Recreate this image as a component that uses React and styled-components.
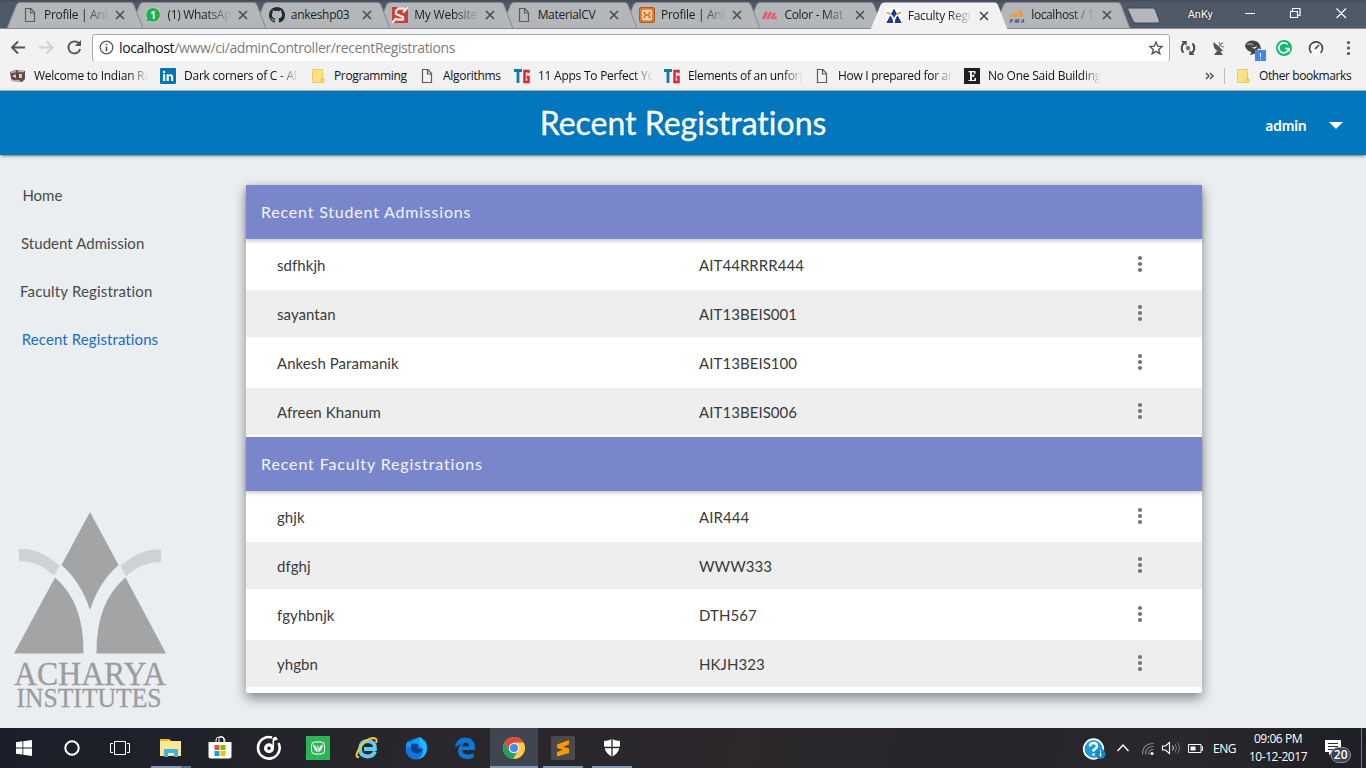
import React from "react";
import styled, { createGlobalStyle, css } from "styled-components";

const Global = createGlobalStyle`
  * { box-sizing: border-box; }
  html, body { margin: 0; padding: 0; overflow: hidden; }
  svg { display: block; flex: none; }
`;

const systemFont = `"Open Sans", "Noto Sans", sans-serif`;

const Screen = styled.div`
  width: 1366px;
  height: 768px;
  display: flex;
  flex-direction: column;
  overflow: hidden;
  font-family: ${systemFont};
  font-variant-ligatures: none;
`;

/* ---------- browser window ---------- */

const TitleBar = styled.div`
  height: 29px;
  flex: none;
  display: flex;
  background: linear-gradient(#434a58 0, #4f5968 3px, #4f5968 100%);
  padding-left: 7px;
  border-bottom: 1px solid #898c90;
`;

const TabShell = styled.div`
  position: relative;
  z-index: ${(p) => p.$z};
  width: 137px;
  height: ${(p) => (p.$active ? 29 : 28)}px;
  margin-right: -13.6px;
  flex: none;
  display: flex;
  align-items: center;
  padding: 2px 0 0 15px;
`;

const TabShape = styled.svg`
  position: absolute;
  left: 0;
  top: 0;
  z-index: -1;
`;

const TabLabel = styled.span`
  width: 65px;
  margin-left: 6px;
  margin-right: 6px;
  overflow: hidden;
  white-space: nowrap;
  font-size: 12px;
  line-height: 18px;
  letter-spacing: ${(p) => p.$track || -0.3}px;
  color: #1c1d1f;
  ${(p) => p.$fade && css`
    mask-image: linear-gradient(90deg, #000 62%, transparent 100%);
  `}
`;

const Caption = styled.div`
  flex: 1;
  display: flex;
  align-items: flex-start;
  margin-left: 9px;
`;

const NewTab = styled.svg`
  margin-top: 7px;
`;

const Profile = styled.span`
  margin: 7px 0 0 27px;
  width: 26px;
  font-family: Roboto, sans-serif;
  font-size: 11px;
  line-height: 15px;
  color: #fff;
  text-shadow: 0 0 2px #222;
  white-space: nowrap;
`;

const WindowControls = styled.svg`
  margin-left: 30px;
`;

const Toolbar = styled.div`
  height: 32px;
  flex: none;
  display: flex;
  align-items: center;
  background: #f2f2f2;
  padding-left: 10px;
`;

const NavIcons = styled.svg`
  margin-right: 8px;
`;

const AddressBar = styled.div`
  width: 1078px;
  height: 28px;
  margin-top: 5px;
  display: flex;
  align-items: center;
  background: #fff;
  border: 1px solid #a9a9a9;
  border-radius: 3px;
  padding: 0 6px;
`;

const Url = styled.span`
  flex: 1;
  margin-left: 5px;
  font-size: 14px;
  line-height: 20px;
  letter-spacing: -0.38px;
  color: #7c7c7c;
  white-space: nowrap;
  b { font-weight: 400; color: #111; }
`;

const Extensions = styled.svg`
  margin: 5px 0 0 8px;
`;

const BookmarkBar = styled.div`
  height: 30px;
  flex: none;
  display: flex;
  align-items: center;
  background: #f2f2f2;
  border-bottom: 1px solid #b1b1b3;
  padding: 1px 0 0 10px;
`;

const Bookmark = styled.div`
  width: ${(p) => p.$w}px;
  flex: none;
  display: flex;
  align-items: center;
`;

const BookmarkLabel = styled.span`
  width: 116px;
  margin-left: 8px;
  overflow: hidden;
  white-space: nowrap;
  font-size: 12px;
  line-height: 18px;
  letter-spacing: ${(p) => p.$track}px;
  color: #111;
  ${(p) => p.$fade && css`
    mask-image: linear-gradient(90deg, #000 82%, transparent 99%);
  `}
`;

const OverflowMark = styled.svg`
  margin-left: 103px;
`;

const Divider = styled.div`
  width: 1px;
  height: 16px;
  background: #bdbdbd;
  margin: 0 10px 0 9px;
`;

/* ---------- web page ---------- */

const Page = styled.div`
  height: 637px;
  flex: none;
  background: #eaeef1;
  font-family: Lato, sans-serif;
  display: flex;
  flex-direction: column;
`;

const AppHeader = styled.header`
  height: 64px;
  flex: none;
  display: grid;
  grid-template-columns: 1fr auto 1fr;
  align-items: center;
  background: #0277bd;
  box-shadow: 0 2px 2px 0 rgba(0,0,0,.14), 0 1px 5px 0 rgba(0,0,0,.12), 0 3px 1px -2px rgba(0,0,0,.2);
  color: #fff;
`;

const Title = styled.h1`
  grid-column: 2;
  margin: 0;
  font-size: 32px;
  font-weight: 400;
  line-height: 64px;
  -webkit-text-stroke: 0.3px #fff;
  white-space: nowrap;
`;

const Account = styled.div`
  display: flex;
  align-items: center;
  justify-content: flex-end;
  padding: 4px 23px 0 0;
  gap: 22.5px;
  font-size: 15px;
  font-weight: 700;
`;

const Body = styled.div`
  flex: 1;
  display: flex;
`;

const Sidebar = styled.aside`
  width: 246px;
  padding-top: 16px;
  display: flex;
  flex-direction: column;
`;

const NavLink = styled.a`
  height: 48px;
  line-height: 48px;
  padding-left: ${(p) => p.$indent}px;
  font-size: 15px;
  letter-spacing: ${(p) => p.$track}px;
  color: ${(p) => (p.$current ? "#1a6cc4" : "#484a4c")};
  white-space: nowrap;
`;

const Logo = styled.svg`
  margin: 146px 0 0 10px;
`;

const Card = styled.main`
  width: 956px;
  height: 508px;
  margin-top: 30px;
  background: #fff;
  border-radius: 2px;
  box-shadow: 0 6px 12px rgba(0,0,0,.3), 0 3px 14px rgba(0,0,0,.16);
`;

const SectionHeader = styled.h2`
  height: 54px;
  margin: 0;
  padding: 0 15px;
  line-height: 54px;
  font-size: 16px;
  font-weight: 400;
  letter-spacing: ${(p) => p.$track}px;
  color: #f4f5fb;
  background: #7986cb;
  box-shadow: 0 2px 4px rgba(0,0,0,.22);
  position: relative;
`;

const Rows = styled.div`
  padding-bottom: 2px;
`;

const Row = styled.div`
  height: ${(p) => (p.$striped ? 47 : 51)}px;
  display: grid;
  grid-template-columns: 422px 438px 1fr;
  align-items: center;
  padding: 1px 0 0 31px;
  font-size: 15px;
  letter-spacing: 0.06px;
  color: #3a3a3a;
  background: ${(p) => (p.$striped ? "#eee" : "#fff")};
`;

const MoreIcon = styled.svg`
  margin-top: -2px;
`;

/* ---------- taskbar ---------- */

const Taskbar = styled.footer`
  height: 40px;
  flex: none;
  display: flex;
  background: linear-gradient(100deg, #1a1f29 0, #20222b 14%, #29272c 32%, #2c282c 55%, #25252b 72%, #29282c 86%, #1e1f26 100%);
  color: #fff;
`;

const SystemButtons = styled.div`
  display: flex;
  width: 147px;
`;

const TaskButton = styled.div`
  width: ${(p) => (p.$slim ? 48 : 49)}px;
  height: 40px;
  display: flex;
  align-items: center;
  justify-content: center;
  padding-right: ${(p) => (p.$slim ? 0 : 1)}px;
  background-repeat: no-repeat;
  ${(p) => p.$state === "open" && css`
    background-image: linear-gradient(#8297b6, #8297b6);
    background-size: 40px 2px;
    background-position: 4px 38px;
  `}
  ${(p) => p.$state === "stacked" && css`
    background-image: linear-gradient(90deg, #8297b6 31px, #3c4450 31px, #3c4450 32px, #5f6f88 32px);
    background-size: 40px 2px;
    background-position: 4px 38px;
  `}
  ${(p) => p.$state === "focused" && css`
    background-image: linear-gradient(#8297b6, #8297b6), linear-gradient(#3f464f, #3f464f);
    background-size: 48px 2px, 48px 40px;
    background-position: 0 38px, 0 0;
  `}
`;

const Tray = styled.div`
  margin-left: auto;
  display: flex;
  align-items: center;
`;

const Language = styled.span`
  width: 26px;
  margin-left: 9px;
  font-size: 12px;
  letter-spacing: -0.5px;
  white-space: nowrap;
`;

const Clock = styled.div`
  width: 62px;
  margin: 0 16px 1px 8px;
  text-align: center;
  font-size: 12px;
  line-height: 18px;
  letter-spacing: -0.45px;
  white-space: nowrap;
`;

const ShowDesktop = styled.div`
  width: 5px;
  height: 40px;
  margin-left: 2px;
  border-left: 1px solid #77787c;
`;

/* ---------- small drawings ---------- */

const Ico = ({ size = 16, children, ...rest }) => (
  <svg width={size} height={size} viewBox="0 0 16 16" fill="none" {...rest}>{children}</svg>
);

const icons = {
  page: (
    <Ico><path d="M3.5 1.5h5.5l3.5 4v9h-9z M8.5 1.500v4.500h4" stroke="#5c5c5c" strokeWidth="1.2" /></Ico>
  ),
  whatsapp: (
    <Ico>
      <path d="M8.200 .6a7.200 7.200 0 1 1-3.500 13.500L.8 15.400l1.100-3.900A7.200 7.200 0 0 1 8.200 .6z" fill="#20b04b" stroke="#dfe8df" strokeWidth=".6" />
      <text x="8.1" y="11.5" fontSize="10" fontWeight="700" fill="#fff" textAnchor="middle">1</text>
    </Ico>
  ),
  github: (
    <Ico>
      <path fill="#24292e" d="M8 0C3.58 0 0 3.58 0 8c0 3.54 2.29 6.53 5.47 7.59.4.07.55-.17.55-.38 0-.19-.01-.82-.01-1.49-2.01.37-2.53-.49-2.69-.94-.09-.23-.48-.94-.82-1.13-.28-.15-.68-.52-.01-.53.63-.01 1.08.58 1.23.82.72 1.21 1.87.87 2.33.66.07-.52.28-.87.51-1.07-1.78-.2-3.64-.89-3.64-3.95 0-.87.31-1.59.82-2.15-.08-.2-.36-1.02.08-2.12 0 0 .67-.21 2.2.82a7.6 7.6 0 0 1 4 0c1.53-1.04 2.2-.82 2.2-.82.44 1.1.16 1.92.08 2.12.51.56.82 1.27.82 2.15 0 3.07-1.87 3.75-3.65 3.95.29.25.54.73.54 1.48 0 1.07-.01 1.93-.01 2.2 0 .21.15.46.55.38A8 8 0 0 0 16 8c0-4.42-3.58-8-8-8z" />
    </Ico>
  ),
  sitepoint: (
    <Ico>
      <path d="M0 0h16v16H0z" fill="#cf3d36" />
      <path d="M13 1.500H6.500L4 4v3l7 3v2.500H4.500M16 0l-5 5.500M0 16l4.500-5" stroke="#eee" strokeWidth="2.300" />
    </Ico>
  ),
  xampp: (
    <Ico>
      <rect x=".5" y=".5" width="15" height="15" rx="1.5" fill="#e07a2d" stroke="#b9581a" />
      <path d="M5.500 3.500h1.700v2.700h1.600V3.500h1.700q2 0 2 2.200 0 1.600-1 2.300 1 .7 1 2.300 0 2.200-2 2.200H8.800V9.800H7.200v2.700H5.500q-2 0-2-2.200 0-1.600 1-2.300-1-.7-1-2.300 0-2.200 2-2.200z" stroke="#fbe6d4" strokeWidth="1.300" />
    </Ico>
  ),
  material: (
    <Ico>
      <path d="M1 12l3.800-7M5.300 12l3.800-7M9.700 12l3-6" stroke="#e35b6c" strokeWidth="2.700" />
      <circle cx="13.600" cy="11" r="1.400" fill="#e35b6c" />
    </Ico>
  ),
  acharya: (
    <Ico>
      <path d="M0 0h16v16H0z" fill="#fff" />
      <path d="M8 .5l3 5.500q-2 1.700-3 4-1-2.300-3-4z M4.300 7.500Q7 10 7.200 15H.3z M11.700 7.500Q9 10 8.800 15h6.900z" fill="#1d3b8c" />
      <path d="M.5 4.500q2.500 0 4 2M15.500 4.500q-2.500 0-4 2" stroke="#f0962f" strokeWidth="1.500" />
    </Ico>
  ),
  pma: (
    <Ico>
      <path d="M8 0q1 5-5 10h5z M9.500 2q5 3 5 8h-5z M1 10q2-2 4-6l-.5 6z" fill="#eb9a3b" />
      <path d="M1 10.500h14" stroke="#bbb" />
      <text x="8" y="15.500" fontSize="5.500" fontWeight="700" fontStyle="italic" fill="#44467e" textAnchor="middle" textLength="15">PMA</text>
    </Ico>
  ),
  close: (
    <Ico size={10} viewBox="0 0 10 10"><path d="M1 1l8 8M9 1L1 9" stroke="#4d4f52" strokeWidth="1.700" /></Ico>
  ),
  train: (
    <Ico>
      <path d="M0 4l6-2 9 1v8l-3 3-10-1-1-3z" fill="#5c4f4c" />
      <path d="M1 4.500l5-1M8 3.500h6M1 12l9 1" stroke="#bdb4ae" strokeWidth="1.500" />
      <path d="M2 8l4-2v4zM9 6h3v4H9z" fill="#d9cfc8" />
      <path d="M6 6l3 5M12 7l2 3M2 10l3 2" stroke="#7e2c2a" strokeWidth="1.200" />
    </Ico>
  ),
  linkedin: (
    <Ico>
      <rect width="16" height="16" rx="1" fill="#0077b5" />
      <path d="M3 6.300h2.200V13H3z M6.600 6.300h2v1c1.300-2 4.600-1.400 4.600 1.600V13H11V9.500c0-2-2.200-1.900-2.200 0V13H6.600z" fill="#fff" />
      <circle cx="4.100" cy="4" r="1.300" fill="#fff" />
    </Ico>
  ),
  folder: (
    <Ico><path d="M2.500 1.500h10v9.500h1.500v3.500h-11.500z" fill="#fee08a" stroke="#eecb5b" /><path d="M11.500 14v-3h2" stroke="#e4b93c" /></Ico>
  ),
  tg: (
    <Ico>
      <path d="M0 2.500h8M4 2v13" stroke="#1279ad" strokeWidth="2.800" />
      <path d="M14.500 5V3h-4v11h4V9h-2" stroke="#e3242b" strokeWidth="2.500" />
    </Ico>
  ),
  e: (
    <Ico>
      <path d="M0 0h16v16H0z" fill="#231f20" />
      <path d="M4.500 3h7v3h-1l-.7-1.800H8V7h1.500V6h.8v3.500h-.8v-1H8v3.400h2l1-2h1v3.200H4.500v-1H6V4.200H4.500z" fill="#f5f5f5" />
    </Ico>
  ),
};

const tabs = [
  { icon: "page", label: "Profile | Ank", fade: true },
  { icon: "whatsapp", label: "(1) WhatsAp", fade: true },
  { icon: "github", label: "ankeshp03" },
  { icon: "sitepoint", label: "My Website", fade: true, track: -0.2 },
  { icon: "page", label: "MaterialCV" },
  { icon: "xampp", label: "Profile | Ank", fade: true },
  { icon: "material", label: "Color - Mat", fade: true },
  { icon: "acharya", label: "Faculty Regi", fade: true, active: true },
  { icon: "pma", label: "localhost / 1", fade: true, track: -0.4 },
];

const Tab = ({ tab, order }) => (
  <TabShell $z={tab.active ? 20 : 10 - order} $active={tab.active}>
    <TabShape width="137" height="29" viewBox="0 0 137 29">
      <path
        d="M0 28.500L9.500 5Q10.500 2.500 13 2.500H124Q126 2.500 127 5L136 28.500z"
        fill={tab.active ? "#f2f2f2" : "#b3b7ba"}
        stroke={tab.active ? "none" : "#85898e"}
      />
      {tab.active && <path d="M0 28h136v1H0z" fill="#f2f2f2" />}
    </TabShape>
    {icons[tab.icon]}
    <TabLabel $fade={tab.fade} $track={tab.track}>{tab.label}</TabLabel>
    {icons.close}
  </TabShell>
);

const bookmarks = [
  { icon: "train", label: "Welcome to Indian Ra", w: 150, fade: true },
  { icon: "linkedin", label: "Dark corners of C - Al", w: 150, fade: true },
  { icon: "folder", label: "Programming", w: 109, track: -0.35 },
  { icon: "page", label: "Algorithms", w: 95, track: -0.3 },
  { icon: "tg", label: "11 Apps To Perfect Yo", w: 150, fade: true },
  { icon: "tg", label: "Elements of an unforg", w: 150, fade: true, track: -0.3 },
  { icon: "page", label: "How I prepared for an", w: 150, fade: true, track: -0.3 },
  { icon: "e", label: "No One Said Building", w: 138, fade: true },
];

const Browser = () => (
  <>
    <TitleBar>
      {tabs.map((t, i) => <Tab key={i} tab={t} order={i} />)}
      <Caption>
        <NewTab width="34" height="17" viewBox="0 0 34 17">
          <path d="M1.500 1h24q2 0 3 2l4 11q.5 2-1.500 2H9q-2 0-3-2L1 3q-.5-2 .5-2z" fill="#b3b7ba" stroke="#3e4654" />
        </NewTab>
        <Profile>AnKy</Profile>
        <WindowControls width="110" height="28" viewBox="0 0 110 28" fill="none" stroke="#fff" strokeWidth="1.200">
          <path d="M1 13.500h10M46.500 11.500h7v6h-7zM48.500 11V8.500h7.500v7h-2M92.500 8.500l9.500 9.500M102 8.500L92.500 18" />
        </WindowControls>
      </Caption>
    </TitleBar>
    <Toolbar>
      <NavIcons width="74" height="32" viewBox="0 0 74 32" fill="none" strokeWidth="1.900">
        <path d="M15 18.500H3M8 12.500l-6 6 6 6" stroke="#545454" />
        <path d="M29 18.500h12M36.500 12.500l6 6-6 6" stroke="#d0d0d0" />
        <path d="M69 14.500a6 6 0 1 0 1.200 5.500" stroke="#545454" />
        <path d="M71 11v6h-6z" fill="#545454" />
      </NavIcons>
      <AddressBar>
        <svg width="15" height="15" viewBox="0 0 15 15" fill="none" stroke="#5a5a5a" strokeWidth="1.300">
          <circle cx="7.500" cy="7.500" r="6.300" />
          <path d="M7.500 6.500v4.500M7.500 3.800v1.500" strokeWidth="1.700" />
        </svg>
        <Url><b>localhost</b>/www/ci/adminController/recentRegistrations</Url>
        <svg width="14" height="14" viewBox="0 0 14 14" fill="none" stroke="#555" strokeWidth="1.400">
          <path d="M7 1l1.700 4.200 4.400.3-3.400 2.900 1.100 4.400L7 10.400l-3.800 2.400 1.100-4.400L.9 5.500l4.400-.3z" />
        </svg>
      </AddressBar>
      <Extensions width="184" height="30" viewBox="0 0 184 30" fill="none">
        <g stroke="#454545" strokeWidth="1.900">
          <path d="M7.500 9.300a6.300 6.300 0 0 0-2 10.200M12.500 20.700a6.300 6.300 0 0 0 2-10.200" />
          <path d="M4 8.700h4v3.500M16 21.300h-4v-3.500" strokeWidth="1.400" />
          <circle cx="10" cy="15" r="1.300" strokeWidth="1.300" />
        </g>
        <path d="M35.500 9q-.5 5 2.500 8 3 2 7 1l-3.500-4zM39 18l-3 4h9l-3-4" fill="#555" />
        <path d="M40.500 13.500L45 9.500M41 9q1 1.500 1 3M46 14q-2-1-3.500-.5" stroke="#888" strokeWidth="1.300" />
        <path d="M67 13q1-5.500 8-5.500 7.500.5 8 9-2-1.500-3-1-1 4-4 5.500l-4 1 1.500-3q-5-1-6.500-6z" fill="#444" />
        <path d="M69 11.500q3-1.500 6 .5" stroke="#aaa" strokeWidth="1.200" />
        <path d="M72 13.500q3 2 7-.5-1 5-7 .5z" fill="#f2f2f2" />
        <path d="M77 17h11v12H77z" fill="#4285f4" />
        <path d="M82.500 20v4M82.500 25.500v1" stroke="#fff" />
        <circle cx="106" cy="15" r="8" fill="#15b872" />
        <path d="M109.500 11.500a5 5 0 1 0 1 5M107 15.500h4v3" stroke="#fff" strokeWidth="1.700" />
        <circle cx="138" cy="15" r="7" fill="#fafafa" />
        <path d="M133.500 20a6.500 6.500 0 1 1 9 0M137 16l4-4" stroke="#444" strokeWidth="1.700" />
        <g fill="#555"><circle cx="170.500" cy="9.500" r="1.600" /><circle cx="170.500" cy="15" r="1.600" /><circle cx="170.500" cy="20.500" r="1.600" /></g>
      </Extensions>
    </Toolbar>
    <BookmarkBar>
      {bookmarks.map((b, i) => (
        <Bookmark key={i} $w={b.w}>
          {icons[b.icon]}
          <BookmarkLabel $fade={b.fade} $track={b.track || -0.25}>{b.label}</BookmarkLabel>
        </Bookmark>
      ))}
      <OverflowMark width="10" height="8" viewBox="0 0 10 8" fill="none" stroke="#555" strokeWidth="1.500">
        <path d="M1 1l3 3-3 3M5 1l3 3-3 3" />
      </OverflowMark>
      <Divider />
      <Bookmark $w={130}>
        {icons.folder}
        <BookmarkLabel $track={-0.42}>Other bookmarks</BookmarkLabel>
      </Bookmark>
    </BookmarkBar>
  </>
);

const links = [
  { label: "Home", indent: 22.4, track: 0 },
  { label: "Student Admission", indent: 21, track: 0.04 },
  { label: "Faculty Registration", indent: 20, track: 0.17 },
  { label: "Recent Registrations", indent: 21.8, track: 0.1, current: true },
];

const sections = [
  {
    title: "Recent Student Admissions",
    track: 0.8,
    rows: [["sdfhkjh", "AIT44RRRR444"], ["sayantan", "AIT13BEIS001"], ["Ankesh Paramanik", "AIT13BEIS100"], ["Afreen Khanum", "AIT13BEIS006"]],
  },
  {
    title: "Recent Faculty Registrations",
    track: 0.88,
    rows: [["ghjk", "AIR444"], ["dfghj", "WWW333"], ["fgyhbnjk", "DTH567"], ["yhgbn", "HKJH323"]],
  },
];

const RegistrationsPage = () => (
  <Page>
    <AppHeader>
      <Title>Recent Registrations</Title>
      <Account>
        admin
        <svg width="14" height="7" viewBox="0 0 14 7"><path d="M0 0h14L7 7z" fill="#fff" /></svg>
      </Account>
    </AppHeader>
    <Body>
      <Sidebar>
        {links.map((l) => (
          <NavLink key={l.label} $indent={l.indent} $track={l.track} $current={l.current}>{l.label}</NavLink>
        ))}
        <Logo width="160" height="205" viewBox="10 509 160 205">
          <path d="M90 512L118.500 565Q99 582 90 610Q81 582 61.500 565z" fill="#a3a4a6" />
          <path d="M55 577.500Q84 602 83.500 653.500H14z M125.500 577.500Q96 602 96.500 653.500H166z" fill="#a3a4a6" />
          <path d="M19 549q21-1 40.500 16.500l-5.500 10Q37 560 19 561.500z M161 549.500q-21-1-40.500 16.500l5.500 10Q143 561 161 562z" fill="#cfd1d3" />
          <g fill="#9b9c9e" stroke="#9b9c9e" strokeWidth=".3" fontFamily="Liberation Serif, serif">
            <text x="14" y="685" fontSize="34" textLength="152" lengthAdjust="spacingAndGlyphs">ACHARYA</text>
            <text x="16.500" y="707" fontSize="26.500" textLength="145" lengthAdjust="spacingAndGlyphs">INSTITUTES</text>
          </g>
        </Logo>
      </Sidebar>
      <Card>
        {sections.map((s) => (
          <React.Fragment key={s.title}>
            <SectionHeader $track={s.track}>{s.title}</SectionHeader>
            <Rows>
              {s.rows.map(([name, id], i) => (
                <Row key={id} $striped={i % 2 === 1}>
                  <span>{name}</span>
                  <span>{id}</span>
                  <MoreIcon width="6" height="18" viewBox="0 0 6 18" fill="#757575">
                    <circle cx="3" cy="3" r="2.100" /><circle cx="3" cy="9" r="2.100" /><circle cx="3" cy="15" r="2.100" />
                  </MoreIcon>
                </Row>
              ))}
            </Rows>
          </React.Fragment>
        ))}
      </Card>
    </Body>
  </Page>
);

const apps = [
  { state: "stacked", art: (
    <svg width="24" height="24" viewBox="0 0 24 24">
      <path d="M1 3h9l2 2h10v15H1z" fill="#fee693" /><path d="M1 3h9v2H1z" fill="#f0b823" />
      <path d="M5 21v-7q0-1 1-1h12q1 0 1 1v7h-4v-4H9v4z" fill="#3bb3e6" />
    </svg>) },
  { art: (
    <svg width="24" height="26" viewBox="0 0 24 26">
      <path d="M.5 7h23v14.500q0 2-2 2H2.500q-2 0-2-2z" fill="#fff" />
      <path d="M8 8V5q0-3 3-3h2q3 0 3 3v3M11 7V3.500Q12 0 15 2q2 1 2 5" fill="none" stroke="#fff" />
      <path d="M6.500 10h5v5h-5z" fill="#f25022" /><path d="M12.500 10h5v5h-5z" fill="#7fba00" />
      <path d="M6.500 16h5v5h-5z" fill="#00a4ef" /><path d="M12.500 16h5v5h-5z" fill="#ffb900" />
    </svg>) },
  { art: (
    <svg width="26" height="26" viewBox="0 0 26 26" fill="none" stroke="#fff">
      <path d="M16 2.500A10.800 10.800 0 1 0 22.500 8" strokeWidth="2.600" />
      <circle cx="13" cy="13.200" r="3.400" strokeWidth="3.200" />
      <path d="M17.300 12.500V4.500" strokeWidth="1.600" /><path d="M16.500 3l3.500-1.500 2 3-4.500 1.500z" fill="#fff" stroke="none" />
    </svg>) },
  { art: (
    <svg width="24" height="24" viewBox="0 0 24 24" fill="none">
      <path d="M0 0h24v24H0z" fill="#2db457" />
      <rect x="5.500" y="6" width="13" height="12" rx="3.500" stroke="#fff" />
      <path d="M7 8.500q4 1 4.800 7.500Q8 15 7 8.500zM17 8.500q-4 1-4.800 7.500Q16 15 17 8.500z" fill="#fff" />
      <path d="M12 9.500v5" stroke="#fff" />
    </svg>) },
  { art: (
    <svg width="24" height="24" viewBox="0 0 24 24" fill="none">
      <path d="M20 15.500q-2 5-7.500 5-7.500-.5-7.500-8 .5-7 7.500-7.500 8 .5 7.500 8H9" stroke="#62cbf4" strokeWidth="3.800" />
      <path d="M4 21Q-1 22 4 13 10 3 18 2q5 0 3 5" stroke="#f5c62b" strokeWidth="2" />
    </svg>) },
  { art: (
    <svg width="24" height="24" viewBox="0 0 24 24">
      <circle cx="12" cy="13" r="10.500" fill="#0c78e0" />
      <path d="M2 11q0-4 2-6l3 2q4-5 9-6-1 4 3 5l2-2q6 11-3 17 3-5-1-9-3-2-4-5-3 3-5 4z" fill="#159bf4" />
      <path d="M7 8q3-1 5 0l3 1-2 2 3 2q2 0 3-1-1 5-6 5.500-5 0-6-4.500z" fill="#0b408e" />
      <path d="M16 1q7 4 6 13 1 7-8 9 9-7 3-13-3-3-1-9z" fill="#20b9ff" />
    </svg>) },
  { art: (
    <svg width="22" height="24" viewBox="0 0 22 24">
      <path d="M1 10Q3 1.500 11.500 1.500 21 2 21 12v2H8q.5 4.500 6 4.500 3 0 5.500-1.500v4.500q-3 1.500-7 1.500-8-.5-8.500-8 0-4.500 4-7-3 .5-6 3zM8.300 10.500H15Q15 6.800 12 6.800 8.800 7 8.300 10.500z" fill="#0a78d7" fillRule="evenodd" />
    </svg>) },
  { state: "focused", art: (
    <svg width="24" height="24" viewBox="0 0 24 24">
      <circle cx="12" cy="12" r="11" fill="#fccd44" />
      <path d="M2.500 6.500A11 11 0 0 1 21.500 6.500H12L7.200 14.700z" fill="#df4a3e" />
      <path d="M2.500 6.500L7.300 14.700 16 15l-5 8A11 11 0 0 1 2.500 6.500z" fill="#1fa15d" />
      <circle cx="12" cy="12" r="5.200" fill="#f1f1f1" /><circle cx="12" cy="12" r="4" fill="#4687f4" />
    </svg>) },
  { state: "open", art: (
    <svg width="24" height="24" viewBox="0 0 24 24">
      <rect width="24" height="24" rx="1.500" fill="#4a4a4a" />
      <path d="M6 8.500L18 4v4.500l-6 2.200 6 1.800v4.500L6 20.500V16l6-2.200-6-1.800z" fill="#ff9800" />
    </svg>) },
  { state: "open", art: (
    <svg width="18" height="20" viewBox="0 0 18 20">
      <path d="M9 1q4 2 8 2 1 11-8 16Q0 14 1 3q4 0 8-2z" fill="#fff" />
      <path d="M9 0v20M0 9.500h18" stroke="#29292e" strokeWidth="1.300" />
    </svg>) },
];

const WindowsTaskbar = () => (
  <Taskbar>
    <SystemButtons>
      <TaskButton $slim>
        <svg width="16" height="16" viewBox="0 0 16 16" fill="#fff"><path d="M0 2.200l6.500-.9v6.200H0zM7.300 1.200L16 0v7.500H7.300zM0 8.400h6.500v6.200L0 13.700zM7.300 8.400H16V16l-8.700-1.200z" /></svg>
      </TaskButton>
      <TaskButton $slim>
        <svg width="16" height="16" viewBox="0 0 16 16"><circle cx="8" cy="8" r="6.700" fill="none" stroke="#fff" strokeWidth="2" /></svg>
      </TaskButton>
      <TaskButton $slim>
        <svg width="20" height="14" viewBox="0 0 20 14" fill="none" stroke="#fff"><path d="M4.500.5h11v13h-11zM3 2.500H.5v9H3M17 2.500h2.500v9H17" /></svg>
      </TaskButton>
    </SystemButtons>
    {apps.map((a, i) => <TaskButton key={i} $state={a.state}>{a.art}</TaskButton>)}
    <Tray>
      <svg width="122" height="40" viewBox="0 0 122 40" fill="none">
        <circle cx="11.500" cy="21" r="9.800" fill="#1b9cd8" stroke="#fff" strokeWidth="1.700" />
        <path d="M8 18.500q0-3.500 3.500-3.500t3.500 3q0 2-3.500 4v1.500M11.500 25.500v2" stroke="#fff" strokeWidth="2.300" />
        <circle cx="18.500" cy="26" r="5" fill="#1389c6" />
        <path d="M18.500 24.500v4M18.500 22.300v1.200" stroke="#fff" strokeWidth="1.300" />
        <path d="M35.500 23l5.500-6 5.500 6" stroke="#fff" strokeWidth="1.400" />
        <path d="M60.500 26.500Q60.500 15.500 71.500 15.500M63.500 26.500q0-8 8-8M66.500 26.500q0-5 5-5" stroke="#85868a" strokeWidth="1.200" />
        <circle cx="70" cy="25.500" r="1.600" fill="#fff" />
        <path d="M80.500 18h3l4-3.500v11l-4-3.500h-3z" stroke="#fff" strokeWidth="1.100" />
        <path d="M90.500 17.500q2 2.500 0 5" stroke="#ddd" />
        <path d="M93 16q3 4 0 8.500M95.500 14.500q4 5.500 0 11" stroke="#77787c" />
        <path d="M106.500 16.500h12.500v8h-12.500zM119.500 18.500h1v4h-1" stroke="#fff" />
        <path d="M108.500 18.500h5v4h-5z" fill="#fff" />
      </svg>
      <Language>ENG</Language>
      <Clock>09:06 PM<br />10-12-2017</Clock>
      <svg width="34" height="40" viewBox="0 0 34 40">
        <path d="M0 12h16v12H7l-3 3.500V24H0z" fill="#fff" />
        <path d="M3 15.500h10M3 18.500h10M3 21.500h6" stroke="#292a30" />
        <rect x="6" y="19.500" width="19.500" height="15" rx="7.500" fill="#3b4250" stroke="#8d929c" />
        <text x="15.700" y="31.200" fontFamily="Open Sans" fontSize="12" fontWeight="600" fill="#fff" textAnchor="middle">20</text>
      </svg>
      <ShowDesktop />
    </Tray>
  </Taskbar>
);

export default function App() {
  return (
    <Screen>
      <Global />
      <Browser />
      <RegistrationsPage />
      <WindowsTaskbar />
    </Screen>
  );
}
